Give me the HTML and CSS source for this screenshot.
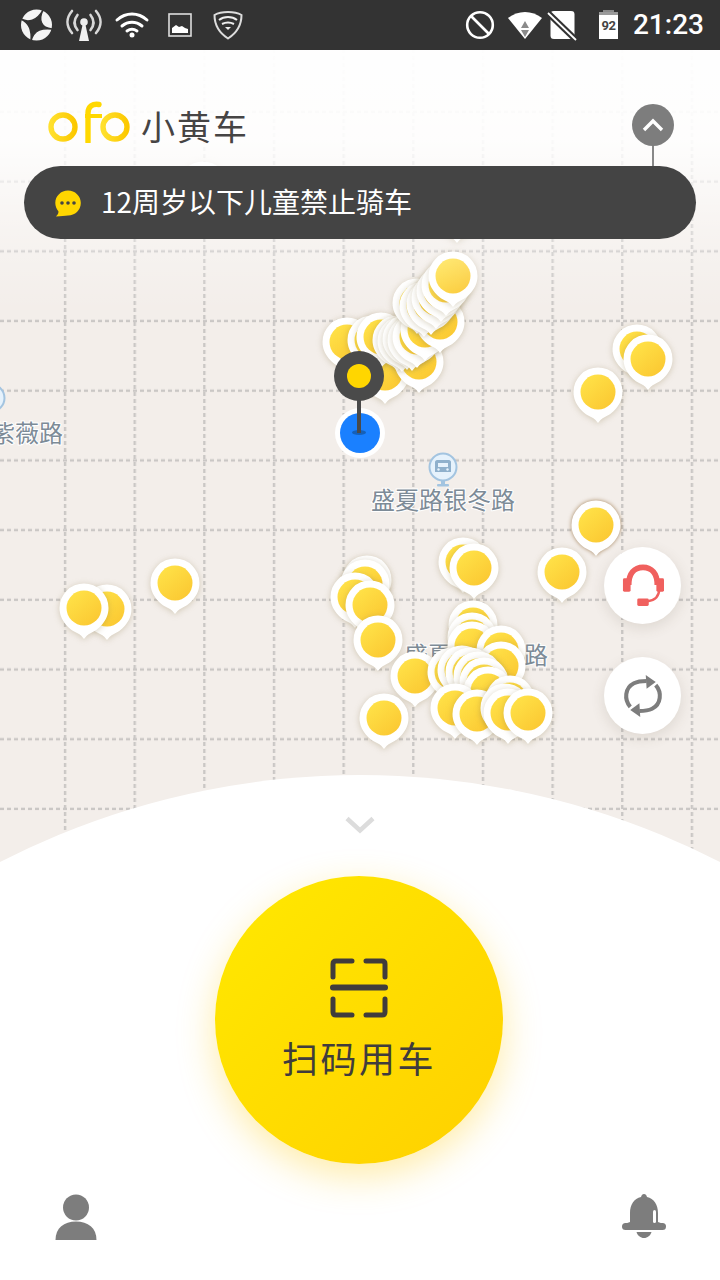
FILE: index.html
```html
<!DOCTYPE html>
<html lang="zh-CN">
<head>
<meta charset="utf-8">
<title>ofo 小黄车</title>
<link rel="stylesheet" href="styles.css">
</head>
<body>
<div class="app">
  <header class="status">
    <svg class="status-left" width="250" height="50" viewBox="0 0 250 50">
      <circle cx="36.500" cy="25" r="15.500" fill="#f4f4f4"/>
      <path d="M21 19C28 23 37 21 43 10 38 20 41 28 52 29 43 28 34 29 31 41 32 31 30 23 21 19Z" fill="#333" stroke="#333" stroke-width="1.500" stroke-linejoin="round"/>
      <g fill="none" stroke="#d8d8d8" stroke-width="2.600" stroke-linecap="round">
        <path d="M72 11c-6 7-6 15 0 22M96 11c6 7 6 15 0 22"/>
        <path d="M77.500 15c-4 5-4 10 0 15M90.500 15c4 5 4 10 0 15"/>
      </g>
      <circle cx="84" cy="22" r="3.800" fill="#eee"/>
      <path d="M82.500 25h3l3.500 16h-10z" fill="#f0f0f0"/>
      <path d="M117 20c9-8 21-8 30 0M122 26c6-5 14-5 20 0M127 31c3-2 7-2 10 0" fill="none" stroke="#fff" stroke-width="3" stroke-linecap="round"/>
      <circle cx="132" cy="35" r="2.500" fill="#fff"/>
      <rect x="169" y="14" width="22" height="22" fill="none" stroke="#ddd" stroke-width="1.600"/>
      <path d="M172 33v-5l4-3 3 2 3-1 3 2 3 1v4z" fill="#fff"/>
      <path d="M228 12c5 0 10 1 13.500 3 0 10-5 18-13.500 23.500C219.500 33 214.500 25 214.500 15c3.500-2 8.500-3 13.500-3z" fill="none" stroke="#ddd" stroke-width="2"/>
      <path d="M219 20c5-4 13-4 18 0M222 24c4-2 8-2 12 0" fill="none" stroke="#eee" stroke-width="2"/>
      <path d="M225 27h6l-3 3z" fill="#eee"/>
    </svg>
    <div class="status-right">
      <svg width="165" height="50" viewBox="460 0 165 50">
        <circle cx="481" cy="25" r="12.800" fill="none" stroke="#fff" stroke-width="2.600"/>
        <path d="M472 16l18 18" stroke="#fff" stroke-width="2.600"/>
        <path d="M509 18c10-8 24-8 34 0l-17 21z" fill="#fff"/>
        <path d="M526 21l4 7h-8zM522 30h8l-4 7z" fill="#8a8a8a"/>
        <path d="M555 11h17c2.500 0 3.500 1 3.500 3.500v21c0 2.500-1 3.500-3.500 3.500h-17c-2.500 0-3.500-1-3.500-3.500v-21c0-2.500 1-3.500 3.500-3.500z" fill="#fff"/>
        <path d="M549 13l28 27" stroke="#333" stroke-width="6"/>
        <path d="M549 13l28 27" stroke="#fff" stroke-width="1.800"/>
        <rect x="604" y="10" width="11" height="3" fill="#8a8a8a"/>
        <rect x="600" y="12" width="19" height="27" fill="#fff"/>
        <rect x="600" y="12" width="19" height="3" fill="#9a9a9a"/>
        <text class="batt" x="609.500" y="30" text-anchor="middle">92</text>
      </svg>
      <span class="time">21:23</span>
    </div>
  </header>

  <main class="map">
    <svg class="map-canvas" width="720" height="1230" viewBox="0 50 720 1230">
      <defs>
        <pattern id="gridV" x="-5.800" y="0" width="69.650" height="7" patternUnits="userSpaceOnUse">
          <rect x="0" y="0" width="2.400" height="4" fill="#cac7c5"/>
        </pattern>
        <pattern id="gridH" x="0" y="-0.500" width="7" height="69.700" patternUnits="userSpaceOnUse">
          <rect x="0" y="41.500" width="4" height="2.400" fill="#cac7c5"/>
        </pattern>
        <linearGradient id="yolk" x1="0.150" y1="0.100" x2="0.850" y2="0.900">
          <stop offset="0" stop-color="#ffe147"/>
          <stop offset="1" stop-color="#fbc933"/>
        </linearGradient>
        <g id="pin">
          <path d="M-24.500 0A24.500 24.500 0 1 1 24.500 0C24.500 13 14 22 7 25C3.500 26.500 1.500 29 0 31C-1.500 29-3.500 26.500-7 25C-14 22-24.500 13-24.500 0Z" fill="#fff"/>
          <circle r="17.500" fill="url(#yolk)"/>
        </g>
        <g id="stop">
          <circle r="13.500" fill="#e6f2fc" stroke="#a3c4e0" stroke-width="2"/>
          <rect x="-2" y="13" width="4" height="5" fill="#a3c4e0"/>
          <rect x="-6" y="17" width="12" height="2.500" rx="1" fill="#a3c4e0"/>
          <path d="M-6-7h12c1 0 2 1 2 2v10h-16v-10c0-1 1-2 2-2z" fill="#8fb0cc"/>
          <rect x="-5" y="-4" width="10" height="4" fill="#e6f2fc"/>
          <circle cx="-4.500" cy="2.500" r="1.200" fill="#e6f2fc"/>
          <circle cx="4.500" cy="2.500" r="1.200" fill="#e6f2fc"/>
        </g>
      </defs>
      <rect x="0" y="50" width="720" height="1230" fill="#f3eeea"/>
      <rect x="0" y="50" width="720" height="1230" fill="url(#gridV)"/>
      <rect x="0" y="50" width="720" height="1230" fill="url(#gridH)"/>

      <use href="#stop" x="-9" y="398"/>
      <use href="#stop" x="443" y="467"/>
      <text class="road" x="63" y="442" text-anchor="end">紫薇路</text>
      <text class="road" x="371" y="509">盛夏路银冬路</text>
      <text class="road" x="404" y="664">盛夏路银冬路</text>

      <g class="pins">
        <use href="#pin" x="203" y="186"/>
        <use href="#pin" x="457" y="212"/>
        <use href="#pin" x="107" y="609"/>
        <use href="#pin" x="84" y="608"/>
        <use href="#pin" x="175" y="583"/>
        <use href="#pin" x="385" y="373"/>
        <use href="#pin" x="419" y="362"/>
        <use href="#pin" x="347" y="342"/>
        <use href="#pin" x="372" y="340"/>
        <use href="#pin" x="381" y="337"/>
        <use href="#pin" x="397" y="340"/>
        <use href="#pin" x="402" y="341"/>
        <use href="#pin" x="407" y="339"/>
        <use href="#pin" x="412" y="340"/>
        <use href="#pin" x="417" y="337"/>
        <use href="#pin" x="425" y="330"/>
        <use href="#pin" x="440" y="322"/>
        <use href="#pin" x="417" y="303"/>
        <use href="#pin" x="424" y="306"/>
        <use href="#pin" x="431" y="304"/>
        <use href="#pin" x="436" y="298"/>
        <use href="#pin" x="441" y="291"/>
        <use href="#pin" x="446" y="285"/>
        <use href="#pin" x="453" y="276"/>
        <use href="#pin" x="637" y="349"/>
        <use href="#pin" x="648" y="359"/>
        <use href="#pin" x="598" y="392"/>
        <use class="pin-halo" href="#pin" x="596" y="525"/>
        <use href="#pin" x="463" y="562"/>
        <use href="#pin" x="474" y="568"/>
        <use href="#pin" x="562" y="572"/>
        <use href="#pin" x="367" y="580"/>
        <use href="#pin" x="365" y="584"/>
        <use href="#pin" x="355" y="597"/>
        <use href="#pin" x="370" y="605"/>
        <use href="#pin" x="378" y="640"/>
        <use href="#pin" x="415" y="676"/>
        <use href="#pin" x="384" y="718"/>
        <use href="#pin" x="473" y="625"/>
        <use href="#pin" x="472" y="637"/>
        <use href="#pin" x="472" y="646"/>
        <use href="#pin" x="452" y="672"/>
        <use href="#pin" x="501" y="650"/>
        <use href="#pin" x="501" y="666"/>
        <use href="#pin" x="462" y="670"/>
        <use href="#pin" x="470" y="672"/>
        <use href="#pin" x="478" y="676"/>
        <use href="#pin" x="484" y="682"/>
        <use href="#pin" x="488" y="691"/>
        <use href="#pin" x="455" y="708"/>
        <use href="#pin" x="477" y="714"/>
        <use href="#pin" x="510" y="700"/>
        <use href="#pin" x="505" y="708"/>
        <use href="#pin" x="508" y="713"/>
        <use href="#pin" x="528" y="713"/>
      </g>

      <circle cx="360" cy="433" r="25" fill="#fff"/>
      <circle cx="360" cy="433" r="20" fill="#1a80ff"/>
      <ellipse cx="359" cy="432.500" rx="7" ry="2.500" fill="#1560b8"/>
      <rect x="357" y="395" width="4" height="38" fill="#4a4a4a"/>
      <circle cx="359" cy="376" r="25" fill="#4a4a4a"/>
      <circle cx="359" cy="376" r="12" fill="#ffd600"/>
    </svg>
    <div class="fade"></div>

    <div class="header">
      <div class="brand-row">
        <div class="brand">
          <svg width="84" height="42" viewBox="0 0 84 42">
            <defs>
              <linearGradient id="logoGrad" x1="0" y1="0" x2="1" y2="0">
                <stop offset="0" stop-color="#ffe02e"/>
                <stop offset="1" stop-color="#fcc800"/>
              </linearGradient>
            </defs>
            <g fill="none" stroke="url(#logoGrad)" stroke-width="5.400">
              <circle cx="15" cy="26" r="12"/>
              <circle cx="67" cy="26" r="12"/>
            </g>
            <path d="M40 41V12C40 5 45 2.500 51 3.500" fill="none" stroke="#ffd800" stroke-width="5.400" stroke-linecap="round"/>
            <path d="M37 15H54" fill="none" stroke="#ffd800" stroke-width="4"/>
          </svg>
          <span class="brand-name">小黄车</span>
        </div>
        <button class="up-btn" type="button">
          <svg width="24" height="16" viewBox="0 0 24 16"><path d="M3 13l9-9 9 9" fill="none" stroke="#fff" stroke-width="3.400"/></svg>
        </button>
      </div>
      <div class="notice">
        <svg class="notice-icon" width="28" height="28" viewBox="0 0 28 28">
          <path d="M14 1.500c7 0 12.800 5.500 12.800 12.500S21 26.500 14 26.500c-3 0-7 1-12 1 1.500-1.500 2.500-3 2.500-5C2.500 20 1.300 17 1.300 14 1.300 7 7 1.500 14 1.500z" fill="#ffd600"/>
          <circle cx="8" cy="14" r="1.800" fill="#444"/>
          <circle cx="14" cy="14" r="1.800" fill="#444"/>
          <circle cx="20" cy="14" r="1.800" fill="#444"/>
        </svg>
        <span class="notice-text">12周岁以下儿童禁止骑车</span>
      </div>
    </div>

    <div class="floats">
      <button class="float-btn" type="button">
        <svg width="42" height="44" viewBox="0 0 44 46">
          <path d="M7 22C7 10 13 3.500 22 3.500S37 10 37 22" fill="none" stroke="#f0605e" stroke-width="6"/>
          <rect x="1" y="15" width="8" height="14" rx="1.500" fill="#f0605e"/>
          <rect x="36" y="15" width="8" height="14" rx="1.500" fill="#f0605e"/>
          <path d="M39 26c0 7-4 12-12 13" fill="none" stroke="#f0605e" stroke-width="2.500"/>
          <rect x="16" y="36" width="12" height="8" rx="1.500" fill="#f0605e"/>
        </svg>
      </button>
      <button class="float-btn" type="button">
        <svg width="40" height="42" viewBox="0 0 44 46">
          <path d="M8 35C1 27 2 14 12 9c5-2.500 9-2.500 14-2.500" fill="none" stroke="#7d7d7d" stroke-width="4.500"/>
          <path d="M25 0l11 7.500-10 7.500z" fill="#7d7d7d"/>
          <path d="M36 11c7 8 6 21-4 26-5 2.500-9 2.500-14 2.500" fill="none" stroke="#7d7d7d" stroke-width="4.500"/>
          <path d="M19 46L8 38.500l10-7.500z" fill="#7d7d7d"/>
        </svg>
      </button>
    </div>
  </main>

  <section class="sheet">
    <svg class="chevron" width="30" height="18" viewBox="0 0 30 18"><path d="M2 2.500l13 12 13-12" fill="none" stroke="#dcdcdc" stroke-width="4.500"/></svg>
    <button class="scan-btn" type="button">
      <svg width="58" height="60" viewBox="0 0 58 60">
        <g fill="none" stroke="#403c3c" stroke-width="5" stroke-linecap="round" stroke-linejoin="round">
          <path d="M3 19V6c0-2 1-3 3-3h16"/>
          <path d="M36 3h16c2 0 3 1 3 3v13"/>
          <path d="M3 41v13c0 2 1 3 3 3h16"/>
          <path d="M36 57h16c2 0 3-1 3-3V41"/>
        </g>
        <path d="M3 29.500h52" stroke="#403c3c" stroke-width="6" stroke-linecap="round"/>
      </svg>
      <span class="scan-label">扫码用车</span>
    </button>
    <nav class="bottom-nav">
      <svg width="42" height="46" viewBox="0 0 42 46">
        <ellipse cx="21" cy="13.500" rx="13" ry="13"/>
        <path d="M0.500 46C0.500 34 9 27.500 21 27.500S41.500 34 41.500 46z"/>
      </svg>
      <svg width="44" height="44" viewBox="0 0 44 44">
        <path d="M22 0c1.500 0 2.500 1 3 3 7 1.500 11 8 11 16v9c2 .5 3 1 3 2H5c0-1 1-1.500 3-2v-9c0-8 4-14.500 11-16 .5-2 1.500-3 3-3z"/>
        <rect x="0" y="29" width="44" height="7" rx="3.500"/>
        <path d="M14.500 38h15c-1 3.500-4 6-7.500 6s-6.500-2.500-7.500-6z"/>
        <rect x="31" y="16" width="3" height="13" rx="1.500" fill="#fff"/>
      </svg>
    </nav>
  </section>
</div>
</body>
</html>
```

FILE: styles.css
```css
* { box-sizing: border-box; }

html, body {
  margin: 0;
  padding: 0;
  background: #fff;
}

.app {
  position: relative;
  width: 720px;
  height: 1280px;
  display: flex;
  flex-direction: column;
  overflow: hidden;
  font-family: "Noto Sans CJK SC", "Noto Sans", sans-serif;
}

button {
  border: 0;
  padding: 0;
  font: inherit;
  cursor: pointer;
}

svg { display: block; }

/* status bar */
.status {
  flex: 0 0 50px;
  display: flex;
  justify-content: space-between;
  align-items: center;
  background: #333;
}

.status-right {
  display: flex;
  align-items: center;
  gap: 9px;
  padding-right: 16px;
}

.time {
  font-family: Roboto, sans-serif;
  font-weight: 500;
  font-size: 28px;
  line-height: 50px;
  color: #fff;
}

.batt {
  font-family: "Roboto", sans-serif;
  font-weight: 700;
  font-size: 13px;
  letter-spacing: -0.5px;
  fill: #444;
}

/* map */
.map {
  position: relative;
  flex: 1;
  overflow: hidden;
}

.map-canvas {
  position: absolute;
  left: 0;
  top: 0;
}

.road {
  font-family: "Noto Sans CJK SC", sans-serif;
  font-size: 24px;
  fill: #7d8b97;
  stroke: #fff;
  stroke-width: 2px;
  paint-order: stroke;
}

.pins use {
  filter: drop-shadow(0 1px 3px rgba(140, 120, 70, 0.32));
}

.pins .pin-halo {
  filter: drop-shadow(0 0 2px rgba(130, 85, 30, 0.7));
}

.fade {
  position: absolute;
  left: 0;
  right: 0;
  top: 0;
  height: 260px;
  background: linear-gradient(to bottom,
    rgba(255, 255, 255, 0.96) 0,
    rgba(255, 255, 255, 0.9) 90px,
    rgba(255, 255, 255, 0.35) 180px,
    rgba(255, 255, 255, 0) 100%);
}

/* header overlay */
.header {
  position: absolute;
  left: 0;
  right: 0;
  top: 0;
  padding: 0 24px;
  display: flex;
  flex-direction: column;
}

.brand-row {
  height: 116px;
  display: flex;
  justify-content: space-between;
  align-items: flex-start;
  padding: 51px 22px 0 24px;
}

.brand {
  display: flex;
  align-items: flex-end;
  gap: 9px;
}

.brand-name {
  font-size: 34px;
  line-height: 34px;
  letter-spacing: 2px;
  color: #464444;
}

.up-btn {
  position: relative;
  width: 42px;
  height: 42px;
  margin-top: 3px;
  border-radius: 50%;
  background: #7d7d7d;
  display: flex;
  align-items: center;
  justify-content: center;
}

.up-btn::after {
  content: "";
  position: absolute;
  left: 20px;
  top: 42px;
  width: 2px;
  height: 20px;
  background: #888;
}

.notice {
  height: 73px;
  border-radius: 37px;
  background: #444;
  display: flex;
  align-items: center;
  gap: 19px;
  padding-left: 30px;
}

.notice-text {
  font-size: 28px;
  line-height: 40px;
  margin-top: -4px;
  color: #fff;
}

/* floating map buttons */
.floats {
  position: absolute;
  right: 39px;
  top: 497px;
  display: flex;
  flex-direction: column;
  gap: 33px;
}

.float-btn {
  width: 77px;
  height: 77px;
  border-radius: 50%;
  background: #fff;
  box-shadow: 0 4px 14px rgba(90, 80, 60, 0.14);
  display: flex;
  align-items: center;
  justify-content: center;
}

/* bottom sheet */
.sheet {
  position: absolute;
  left: 0;
  right: 0;
  top: 775px;
  bottom: 0;
  display: flex;
  flex-direction: column;
  align-items: center;
}

.sheet::before {
  content: "";
  position: absolute;
  left: -428px;
  top: 0;
  width: 1576px;
  height: 1576px;
  border-radius: 50%;
  background: #fff;
}

.chevron {
  position: relative;
  margin-top: 41px;
}

.scan-btn {
  position: relative;
  flex: 0 0 288px;
  width: 288px;
  margin: 42px 2px 0 0;
  border-radius: 50%;
  background: linear-gradient(135deg, #ffe900 0%, #ffdf00 40%, #ffd000 100%);
  box-shadow: 0 12px 36px rgba(255, 205, 30, 0.38);
  display: flex;
  flex-direction: column;
  align-items: center;
  padding-top: 82px;
}

.scan-label {
  margin-top: 17px;
  font-size: 36px;
  line-height: 44px;
  letter-spacing: 2.5px;
  color: #403c3c;
}

.bottom-nav {
  position: relative;
  align-self: stretch;
  margin-top: 30px;
  padding: 0 54px 0 55px;
  display: flex;
  justify-content: space-between;
  fill: #7d7d7d;
}
```
